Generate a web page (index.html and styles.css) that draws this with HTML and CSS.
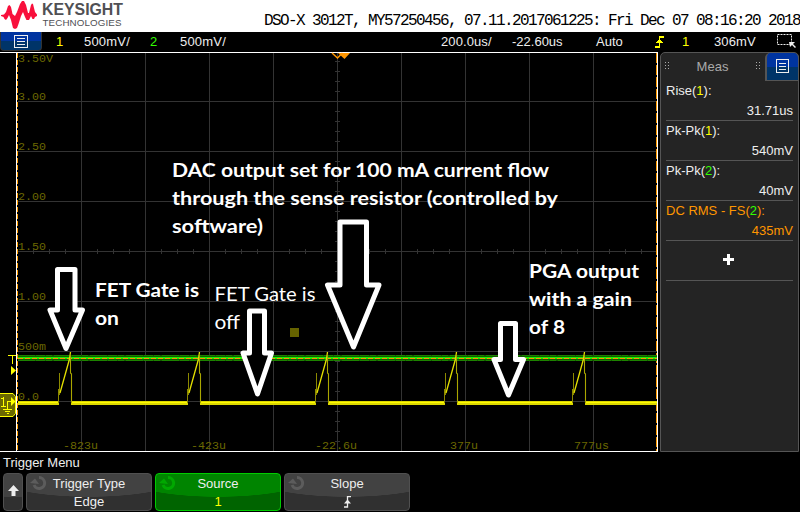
FILE: index.html
```html
<!DOCTYPE html>
<html lang="en">
<head>
<meta charset="utf-8">
<title>Oscilloscope</title>
<link rel="stylesheet" href="styles.css">
</head>
<body>
<div class="scope">
  <header class="brand">
    <svg class="logo" width="128" height="32" viewBox="0 0 128 32">
      <path fill="#f8103c" d="M1 15L4 14.500L6 12L8 6L9.500 5L11 7L12.500 14L15 16L17 12L20 4L22 1H24L26 5L28 13L29 13L31 5L32 3.500L33 4L35 12L37 14.500V16L35 17L34 19L32.500 19L31 16L29 20H26.500L25 17L23 12L21 16L18.500 24L17 28L15 29L13 28L11 20L9 15L7.500 18L6 20L4.500 19L3.500 17L1 16Z"/>
      <text class="logo-name" x="42" y="15" textLength="81" lengthAdjust="spacingAndGlyphs">KEYSIGHT</text>
      <text class="logo-sub" x="42.500" y="26" textLength="79" lengthAdjust="spacing">TECHNOLOGIES</text>
    </svg>
    <div class="serial">DSO-X 3012T, MY57250456, 07.11.2017061225: Fri Dec 07 08:16:20 2018</div>
  </header>

  <div class="status">
    <div class="menu-key"><svg width="14" height="13" viewBox="0 0 14 13"><path class="list-icon" d="M.5 .5h13v12h-13zM3 3.500h8M3 6.500h8M3 9.500h8"/></svg></div>
    <span class="s-ch1">1</span><span class="s-v1">500mV/</span>
    <span class="s-ch2">2</span><span class="s-v2">500mV/</span>
    <span class="s-time">200.0us/</span><span class="s-delay">-22.60us</span><span class="s-auto">Auto</span>
    <svg class="s-edge" width="10" height="12" viewBox="0 0 10 12" shape-rendering="crispEdges"><path d="M0 11h5M4.500 11V1M4 1h5" stroke="#ff0" stroke-width="1.600" fill="none"/><path d="M0 7h9L4.500 3z" fill="#ff0"/></svg>
    <span class="s-src">1</span><span class="s-level">306mV</span>
    <svg class="s-select" width="19" height="15" viewBox="0 0 19 15"><path d="M.5 .5h14v10h-14z" fill="none" stroke="#eee" stroke-dasharray="2 1"/><path d="M12 8h6l-2 2 3 3-1 1-3-3-2 2z" fill="#eee"/></svg>
  </div>

  <main class="work">
    <svg class="plot" width="660" height="401" viewBox="0 52 660 401">
      <defs>
        <g id="pulse">
          <path d="M58.500 403V389M59.500 373V395" stroke="#8c8900" fill="none"/>
          <path d="M60 393L69.500 359L70.500 352" stroke="#e4e000" stroke-width="1.300" fill="none"/>
          <path d="M70.500 354V373L71.500 374V403" stroke="#aaa600" stroke-width="1.100" fill="none"/>
        </g>
      </defs>
      <g class="grid" shape-rendering="crispEdges">
        <path d="M81.500 53V451M145.500 53V451M209.500 53V451M273.500 53V451M337.500 53V451M401.500 53V451M465.500 53V451M529.500 53V451M593.500 53V451"/>
        <path d="M18 101.500H657M18 151.500H657M18 201.500H657M18 251.500H657M18 301.500H657M18 351.500H657M18 401.500H657"/>
        <path d="M17 251.500H657" stroke-width="5" stroke-dasharray="1 15"/>
        <path d="M337.500 61V451" stroke-width="5" stroke-dasharray="1 9"/>
      </g>
      <g class="axis-label">
        <text x="18" y="62" textLength="35">3.50V</text>
        <text x="18" y="100" textLength="28">3.00</text>
        <text x="18" y="150" textLength="28">2.50</text>
        <text x="18" y="200" textLength="28">2.00</text>
        <text x="18" y="250" textLength="28">1.50</text>
        <text x="18" y="300" textLength="28">1.00</text>
        <text x="18" y="350" textLength="28">500m</text>
        <text x="18" y="400" textLength="21">0.0</text>
        <text x="63" y="449" textLength="35">-823u</text>
        <text x="191" y="449" textLength="35">-423u</text>
        <text x="315" y="449" textLength="42">-22.6u</text>
        <text x="450" y="449" textLength="28">377u</text>
        <text x="574" y="449" textLength="35">777us</text>
      </g>
      <g shape-rendering="crispEdges">
        <path d="M0 52.500H658" stroke="#fff"/>
        <path d="M0 451.500H658" stroke="#fff"/>
        <path d="M16.500 52V452" stroke="#fff"/>
        <path d="M17.500 53V451" stroke="#ff9c00" stroke-dasharray="5 2"/>
        <path d="M656.500 53V451" stroke="#ff9c00" stroke-dasharray="10 2"/>
        <path d="M657.500 52V452" stroke="#fff"/>
        <path d="M18 358H657" stroke="#145c00" stroke-width="6"/>
        <path d="M18 355.500H657M18 360.500H657" stroke="#1d8200" stroke-dasharray="17 1 9 1 6 2"/>
        <path d="M18 358H657" stroke="#18f000" stroke-width="2"/>
        <path d="M18 358.500H657" stroke="#ff9200" stroke-dasharray="5 2"/>
        <path d="M18 403H59M71 403H188M200 403H316M328 403H445M457 403H573M585 403H657" stroke="#dcd800" stroke-width="4"/>
        <path d="M18 402.500H59M71 402.500H188M200 402.500H316M328 402.500H445M457 402.500H573M585 402.500H657" stroke="#fffb00" stroke-width="1"/>
        <rect x="290" y="328" width="9" height="9" fill="#666300"/>
      </g>
      <use href="#pulse"/><use href="#pulse" x="129"/><use href="#pulse" x="257"/><use href="#pulse" x="386"/><use href="#pulse" x="514"/>
      <path d="M332 53l5.500 5 5-5" fill="none" stroke="#ff9600" stroke-width="1.500"/>
      <path d="M338 53h12l-5.500 6z" fill="#ff9600"/>
      <path d="M8 355.500h8M12.500 355v9" stroke="#ff0" fill="none"/>
      <path d="M11 366l5 4.500-5 4.500z" fill="#ff0"/>
      <path d="M0 393.500h13l2.500 3v17l-2.500 3h-13" fill="#6b6800" stroke="#ff0"/>
      <path d="M3.500 397v9M1 398.500h2M1 406.500h5M7.500 409v-7.500H12M3 409.500h9M5 411.500h5M6.500 413.500h2" stroke="#ff0" fill="none" shape-rendering="crispEdges"/>
      <path d="M11 397l4.500 4.500-4.500 4.500z" fill="#ff0"/>
      <g class="arrow">
        <path d="M57.500 269.500H75V310H82.500L66 348.500L50 310H57.500z"/>
        <path d="M249.500 311H264.500V353H271.500L257.500 394L243 353H249.500z"/>
        <path d="M340 222H366.500V285H379L353.500 347L327.500 285H340z"/>
        <path d="M500.500 323.500H515.500V359.500H523.500L508.500 395L494 359.500H500.500z"/>
      </g>
      <g class="note">
        <text x="172" y="176.500" textLength="377" lengthAdjust="spacingAndGlyphs">DAC output set for 100 mA current flow</text>
        <text x="172" y="204.500" textLength="386" lengthAdjust="spacingAndGlyphs">through the sense resistor (controlled by</text>
        <text x="172" y="232.500" textLength="91" lengthAdjust="spacingAndGlyphs">software)</text>
        <text x="95" y="296.500" textLength="104" lengthAdjust="spacingAndGlyphs">FET Gate is</text>
        <text x="95" y="325" textLength="24" lengthAdjust="spacingAndGlyphs">on</text>
        <text class="thin" x="214.500" y="301" textLength="101" lengthAdjust="spacingAndGlyphs">FET Gate is</text>
        <text class="thin" x="214.500" y="329" textLength="25.500" lengthAdjust="spacingAndGlyphs">off</text>
        <text x="529" y="277.500" textLength="110" lengthAdjust="spacingAndGlyphs">PGA output</text>
        <text x="529" y="305.500" textLength="103" lengthAdjust="spacingAndGlyphs">with a gain</text>
        <text x="529" y="333.500" textLength="36" lengthAdjust="spacingAndGlyphs">of 8</text>
      </g>
    </svg>

    <aside class="side">
      <div class="tabs">
        <div class="tab"><i class="grip"></i><span>Meas</span><i class="grip"></i></div>
        <div class="tab-key"><svg width="14" height="15" viewBox="0 0 14 15"><path class="list-icon" d="M.5 .5h12v13h-12zM3 4.500h7M3 7.500h7M3 10.500h7"/></svg></div>
      </div>
      <div class="list">
        <div class="meas"><div>Rise(<b class="c1">1</b>):</div><div class="val">31.71us</div></div>
        <div class="meas"><div>Pk-Pk(<b class="c1">1</b>):</div><div class="val">540mV</div></div>
        <div class="meas"><div>Pk-Pk(<b class="c2">2</b>):</div><div class="val">40mV</div></div>
        <div class="meas hot"><div>DC RMS - FS(<b class="c2">2</b>):</div><div class="val">435mV</div></div>
        <div class="meas add"><svg width="11" height="11" viewBox="0 0 11 11"><path d="M5.500 0v11M0 5.500h11" stroke="#fff" stroke-width="3"/></svg></div>
      </div>
    </aside>
  </main>

  <footer class="softkeys">
    <div class="title">Trigger Menu</div>
    <div class="keys">
      <div class="key up"><svg width="11" height="11" viewBox="0 0 11 11"><path d="M5.500 0L11 6H7.500v5h-4V6H0z" fill="#eee"/></svg></div>
      <div class="key"><svg class="knob" width="18" height="15" viewBox="0 0 18 15"><path d="M9 1.500A5.500 5.500 0 1 1 4 9" /><path class="head" d="M0 7L5 2.500 9 8z"/></svg><div>Trigger Type</div><div>Edge</div></div>
      <div class="key active"><svg class="knob" width="18" height="15" viewBox="0 0 18 15"><path d="M9 1.500A5.500 5.500 0 1 1 4 9" /><path class="head" d="M0 7L5 2.500 9 8z"/></svg><div>Source</div><div class="c1">1</div></div>
      <div class="key"><svg class="knob" width="18" height="15" viewBox="0 0 18 15"><path d="M9 1.500A5.500 5.500 0 1 1 4 9" /><path class="head" d="M0 7L5 2.500 9 8z"/></svg><div>Slope</div><div class="edge"><svg width="7" height="12" viewBox="0 0 7 12"><path d="M0 11h3.500V.7H7" stroke="#eee" stroke-width="1.300" fill="none"/><path d="M0 7.500h7L3.500 3.500z" fill="#eee"/></svg></div></div>
    </div>
  </footer>
</div>
</body>
</html>
```
FILE: styles.css
```css
* { box-sizing: border-box; }
body { margin: 0; background: #000; }
.scope {
  width: 800px; height: 512px; overflow: hidden;
  display: flex; flex-direction: column;
  font: 13px/15px "Liberation Sans", Arial, sans-serif;
  color: #eee; background: #000;
}
.brand { display: flex; height: 32px; background: #fff; color: #000; }
.logo { flex: none; }
.logo-name { font: bold 16.5px "Liberation Sans", sans-serif; fill: #505054; }
.logo-sub { font: 9.8px "Liberation Sans", sans-serif; fill: #505054; }
.serial {
  margin-left: auto; padding-top: 12px; white-space: pre;
  font: 16px/18px "Liberation Mono", monospace; letter-spacing: -1.6px;
}

.status { display: flex; height: 20px; padding-top: 2px; white-space: nowrap; }
.status > * { flex: none; }
.menu-key {
  width: 42px; height: 19px; margin-top: -2px;
  display: flex; align-items: center; justify-content: center;
  background: linear-gradient(#0034a0 52%, #003468 52%);
  border: 1px solid #333; border-top: 0; border-radius: 0 0 4px 4px;
}
.list-icon { fill: none; stroke: #eee; shape-rendering: crispEdges; }
.s-ch1 { width: 28px; margin-left: 14px; color: #ff0; }
.s-v1 { width: 66px; letter-spacing: .2px; }
.s-ch2 { width: 30px; color: #3f0; }
.s-v2 { width: 261px; letter-spacing: .2px; }
.s-time { width: 71px; letter-spacing: .1px; }
.s-delay { width: 84px; letter-spacing: 0; }
.s-auto { width: 59px; }
.s-edge { width: 10px; margin-top: 2px; }
.s-src { width: 32px; margin-left: 17px; color: #ff0; }
.s-level { width: 63px; letter-spacing: .1px; }
.s-select { width: 19px; }

.work { display: flex; height: 401px; }
.plot { flex: none; display: block; }
.grid { stroke: #333; fill: none; }
.axis-label { font: 11.67px "Liberation Mono", monospace; fill: #6b6800; }
.arrow { fill: #000; stroke: #fff; stroke-width: 5; stroke-linejoin: round; }
.note { font: bold 19px Lato, sans-serif; fill: #fff; }
.note .thin { font-weight: 400; }

.side {
  width: 139px; height: 400px;
  background: #242424; border: 1px solid #555; border-radius: 5px 5px 0 0;
}
.tabs { display: flex; height: 28px; margin-right: -1px; }
.tab {
  flex: 1; display: flex; align-items: center; justify-content: space-between;
  padding: 0 4px 2px 3px; color: #aaa; font-size: 13px;
}
.grip {
  width: 6px; height: 8px;
  background:
    linear-gradient(90deg, #242424 1px, transparent 1px 4px, #242424 4px) 1px 0 / 100% 100%,
    repeating-linear-gradient(#aaa 0 1px, transparent 1px 3px);
  background:
    repeating-linear-gradient(#aaa 0 1px, transparent 1px 3px) 1px 0 / 1px 100% no-repeat,
    repeating-linear-gradient(#aaa 0 1px, transparent 1px 3px) 4px 0 / 1px 100% no-repeat;
}
.tab-key {
  width: 34px; display: flex; align-items: center; justify-content: center;
  background: linear-gradient(#0034a0 52%, #003468 52%);
  border: 1px solid #555; border-top: 0; border-left-width: 2px; border-radius: 5px 5px 0 0;
}
.list { padding: 0 5px; }
.meas { height: 40px; padding-top: 2px; border-bottom: 1px solid #555; white-space: nowrap; }
.meas .val { margin-top: 5px; text-align: right; }
.meas b { font-weight: 400; }
.c1 { color: #ff0; }
.c2 { color: #3f0; }
.hot { color: #ff9600; }
.add { padding: 12px 0 0 57px; }

.softkeys { height: 59px; }
.title { height: 20px; padding: 2px 3px 0; }
.keys { display: flex; gap: 3px; height: 39px; padding-left: 3px; }
.key {
  position: relative; width: 126px; height: 38px; padding-top: 1px; text-align: center;
  line-height: 18px; border: 1px solid #505050; border-radius: 4px;
  background: radial-gradient(ellipse 100px 23px at 50% 0, #424242 98%, #303030 100%);
}
.key.up { width: 20px; padding-top: 9px; }
.key.active { border-color: #0c0; background: radial-gradient(ellipse 100px 23px at 50% 0, #008400 98%, #006400 100%); }
.knob { position: absolute; left: 3px; top: 2px; fill: none; stroke: #5c5c5c; stroke-width: 3; }
.knob .head { fill: #5c5c5c; stroke: none; }
.active .knob { stroke: #00a800; }
.active .knob .head { fill: #00a800; }
.edge { display: flex; justify-content: center; padding-top: 3px; }
```
